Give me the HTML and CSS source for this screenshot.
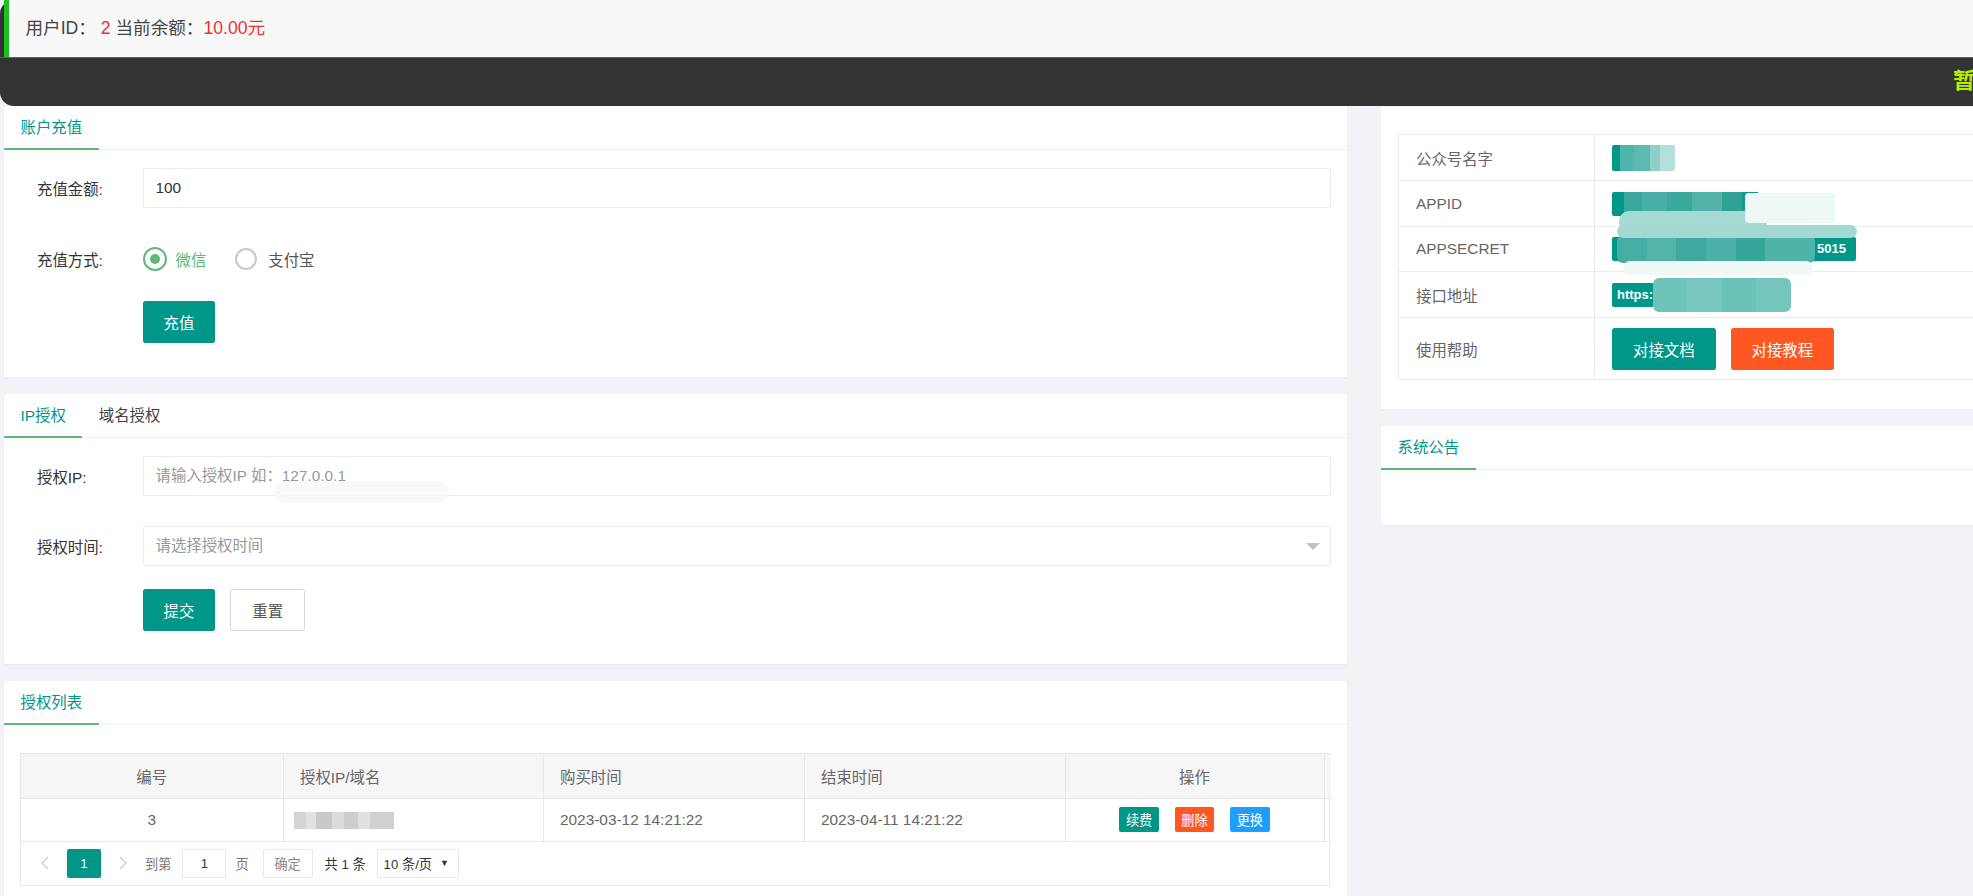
FILE: index.html
```html
<!DOCTYPE html>
<html lang="zh-CN">
<head>
<meta charset="utf-8">
<title>用户中心</title>
<link rel="stylesheet" href="styles.css">
</head>
<body>
<div class="top">
  <div class="quote">用户ID： <span class="red">2</span> 当前余额：<span class="red">10.00元</span></div>
  <div class="notice">暂无公告，欢迎使用本系统</div>
</div>

<div class="main">
  <div class="col-left">
    <div class="card">
      <div class="tabs"><div class="tab active">账户充值</div></div>
      <div class="card-body">
        <div class="form-row">
          <div class="label">充值金额:</div>
          <div class="input">100</div>
        </div>
        <div class="form-row row-radio">
          <div class="label">充值方式:</div>
          <div class="radio"><span class="radio-icon on"></span><span class="radio-text on">微信</span></div>
          <div class="radio"><span class="radio-icon"></span><span class="radio-text">支付宝</span></div>
        </div>
        <div class="form-row row-btn">
          <div class="btn">充值</div>
        </div>
      </div>
    </div>

    <div class="card">
      <div class="tabs"><div class="tab active">IP授权</div><div class="tab">域名授权</div></div>
      <div class="card-body second">
        <div class="form-row">
          <div class="label">授权IP:</div>
          <div class="input placeholder">请输入授权IP 如：127.0.0.1<span class="ip-smear"></span></div>
        </div>
        <div class="form-row row-select">
          <div class="label">授权时间:</div>
          <div class="input placeholder select">请选择授权时间<span class="caret"></span></div>
        </div>
        <div class="form-row row-btn2">
          <div class="btn">提交</div>
          <div class="btn btn-primary">重置</div>
        </div>
      </div>
    </div>

    <div class="card">
      <div class="tabs"><div class="tab active">授权列表</div></div>
      <div class="list-body">
        <div class="table-box">
          <table class="grid">
            <colgroup><col class="c1"><col class="c2"><col class="c3"><col class="c4"><col class="c5"><col class="c6"></colgroup>
            <thead>
              <tr><th class="center">编号</th><th>授权IP/域名</th><th>购买时间</th><th>结束时间</th><th class="center">操作</th><th></th></tr>
            </thead>
            <tbody>
              <tr>
                <td class="center">3</td>
                <td><span class="ip-blur"></span></td>
                <td>2023-03-12 14:21:22</td>
                <td>2023-04-11 14:21:22</td>
                <td class="center ops"><span class="xs teal">续费</span><span class="xs orange">删除</span><span class="xs blue">更换</span></td>
                <td></td>
              </tr>
            </tbody>
          </table>
          <div class="pager">
            <span class="chev"><svg width="8" height="14" viewBox="0 0 8 14"><path d="M7 1 L1 7 L7 13" fill="none" stroke="#c8c8c8" stroke-width="1.2"/></svg></span>
            <span class="page-cur">1</span>
            <span class="chev"><svg width="8" height="14" viewBox="0 0 8 14"><path d="M1 1 L7 7 L1 13" fill="none" stroke="#c8c8c8" stroke-width="1.2"/></svg></span>
            <span class="pg-text light">到第</span>
            <span class="pg-input">1</span>
            <span class="pg-text light">页</span>
            <span class="pg-btn">确定</span>
            <span class="pg-text">共 1 条</span>
            <span class="pg-select">10 条/页 <span class="tri">▼</span></span>
          </div>
        </div>
      </div>
    </div>
  </div>

  <div class="col-right">
    <div class="card info-card">
      <table class="info">
        <colgroup><col class="ic1"><col></colgroup>
        <tr class="r1"><td class="k">公众号名字</td><td class="v"><span class="bd b-name"></span></td></tr>
        <tr class="r2"><td class="k">APPID</td><td class="v"><span class="bd b-appid"></span><span class="smear s-appid"></span><span class="smear s-appid2"></span></td></tr>
        <tr class="r3"><td class="k">APPSECRET</td><td class="v"><span class="bd b-secret">5015</span><span class="blk b-secret-blur"></span><span class="smear s-secret"></span><span class="smear s-secret2"></span></td></tr>
        <tr class="r4"><td class="k">接口地址</td><td class="v"><span class="bd b-url">https:</span><span class="blk b-url-blur"></span></td></tr>
        <tr class="r5"><td class="k">使用帮助</td><td class="v"><span class="btn">对接文档</span><span class="btn btn-orange">对接教程</span></td></tr>
      </table>
    </div>
    <div class="card">
      <div class="tabs"><div class="tab active">系统公告</div></div>
      <div class="notice-body"></div>
    </div>
  </div>
</div>
</body>
</html>
```

FILE: styles.css
```css
* { box-sizing: border-box; }
html, body { margin: 0; padding: 0; }
body {
  width: 1973px;
  height: 896px;
  overflow: hidden;
  background: #f2f3f6;
  font-family: "Liberation Sans", "Noto Sans CJK SC", sans-serif;
  font-size: 15.4px;
  color: #333;
}

/* top */
.top { background: #333; border-radius: 14px 0 0 14px; }
.quote {
  margin-left: 4px;
  height: 57px;
  padding: 16px 16.5px;
  line-height: 25px;
  font-size: 17.6px;
  background: #f8f8f8;
  border-left: 5px solid #1ec21e;
  color: #444;
}
.red { color: #f03030; }
.notice {
  height: 49px;
  border-top: 1px solid #5c5c5c;
  padding-left: 1953px;
  line-height: 46px;
  font-size: 22px;
  font-weight: bold;
  color: #b2f000;
  white-space: nowrap;
  overflow: hidden;
}

/* layout */
.main { display: flex; gap: 34px; padding-left: 4px; align-items: flex-start; }
.col-left { width: 1343px; flex-shrink: 0; display: flex; flex-direction: column; gap: 17px; }
.col-right { width: 640px; flex-shrink: 0; display: flex; flex-direction: column; gap: 17px; padding-top: 1px; }
.card { background: #fff; border-radius: 2px; box-shadow: 0 1px 2px rgba(0,0,0,0.04); }

.tabs { display: flex; height: 44px; border-bottom: 1px solid #f0f0f0; }
.tab { position: relative; padding: 0 16.5px; line-height: 43px; color: #444; }
.tab.active { color: #009688; }
.tab.active::after {
  content: ""; position: absolute; left: 0; right: 0; bottom: -1px;
  height: 2px; background: #5fb878;
}

/* forms */
.card-body { padding: 18px 16.5px 34px; }
.card-body.second { padding-bottom: 33px; }
.form-row { display: flex; align-items: center; }
.label { width: 122px; flex-shrink: 0; padding-left: 16.5px; color: #333; }
.input {
  position: relative;
  flex: 1; height: 40px; line-height: 38px;
  border: 1px solid #ececec; border-radius: 2px;
  padding-left: 12px; color: #333;
}
.placeholder { color: #999; }
.ip-smear {
  position: absolute; left: 130px; top: 24px; width: 175px; height: 22px;
  background: rgba(248,248,248,0.8); border-radius: 12px;
}
.caret {
  position: absolute; right: 10px; top: 16px;
  width: 0; height: 0;
  border-left: 7px solid transparent; border-right: 7px solid transparent;
  border-top: 7px solid #c2c2c2;
}
.row-radio { margin-top: 30px; height: 42px; }
.row-btn { margin-top: 21px; padding-left: 122px; }
.row-select { margin-top: 30px; }
.row-btn2 { margin-top: 23px; padding-left: 122px; gap: 15px; }

.radio { display: flex; align-items: center; }
.radio-icon { width: 22px; height: 22px; border: 2px solid #c8c8c8; border-radius: 50%; position: relative; margin-left: 1px; }
.radio-icon.on { width: 24px; height: 24px; border-color: #5fb878; margin-left: 0; }
.radio-icon.on::after {
  content: ""; position: absolute; left: 5px; top: 5px;
  width: 10px; height: 10px; border-radius: 50%; background: #5fb878;
}
.radio-text { margin-left: 11px; margin-right: 28px; color: #555; }
.radio-text.on { margin-left: 9px; color: #5fb878; }

.btn {
  display: inline-flex; align-items: center; justify-content: center;
  height: 42px; padding: 0 21px;
  background: #009688; color: #fff; border-radius: 2.5px;
  white-space: nowrap;
}
.btn-primary { background: #fff; color: #555; border: 1px solid #d6d6d6; }
.btn-orange { background: #ff5722; }

/* list */
.list-body { padding: 28px 17px 20px 16px; }
.table-box { border: 1px solid #e8e8e8; }
.grid { width: 100%; border-collapse: collapse; table-layout: fixed; color: #666; }
.grid .c1 { width: 262px; }
.grid .c2 { width: 260px; }
.grid .c3 { width: 261px; }
.grid .c4 { width: 261px; }
.grid .c5 { width: 259px; }
.grid .c6 { width: 7px; }
.grid th, .grid td {
  border-right: 1px solid #e8e8e8; border-bottom: 1px solid #e8e8e8;
  padding: 0 16.5px; text-align: left; font-weight: normal; white-space: nowrap;
}
.grid th { height: 44px; background: #f6f6f6; }
.grid td { height: 43px; }
.grid th:last-child, .grid td:last-child { border-right: none; padding: 0; }
.grid .center { text-align: center; }
.grid td.ops { font-size: 0; }
.ip-blur {
  display: inline-block; width: 100px; height: 17px; vertical-align: middle; margin-left: -6px;
  background: linear-gradient(90deg, #d4d4d4 0 12%, #e2e2e2 12% 22%, #c9c9c9 22% 38%, #dcdcdc 38% 50%, #cdcdcd 50% 64%, #e0e0e0 64% 76%, #d0d0d0 76% 100%);
}
.xs {
  display: inline-flex; align-items: center; justify-content: center;
  height: 25px; padding: 0 6.5px; margin: 0 8px;
  font-size: 13.2px; color: #fff; border-radius: 2px; vertical-align: middle;
}
.teal { background: #009688; }
.orange { background: #ff5722; }
.blue { background: #1e9fff; }

.pager { display: flex; align-items: center; height: 43px; padding-left: 20px; font-size: 13.2px; color: #333; }
.chev { display: inline-flex; align-items: center; width: 8px; }
.page-cur {
  display: inline-flex; align-items: center; justify-content: center;
  width: 34px; height: 29px; margin: 0 18px; background: #009688; color: #fff; border-radius: 2px;
}
.pg-text { margin-left: 18px; }
.pg-text.light { color: #777; }
.pg-input {
  display: inline-flex; align-items: center; justify-content: center;
  width: 44px; height: 29px; margin-left: 11px; border: 1px solid #e8e8e8; border-radius: 2px;
}
.pg-input + .pg-text { margin-left: 9px; }
.pg-btn {
  display: inline-flex; align-items: center; justify-content: center;
  width: 50px; height: 29px; margin-left: 14px; border: 1px solid #e8e8e8; border-radius: 2px; color: #888;
}
.pg-btn + .pg-text { margin-left: 12px; }
.pg-select {
  display: inline-flex; align-items: center;
  width: 82px; height: 29px; margin-left: 11px; padding-left: 6px;
  border: 1px solid #e8e8e8; border-radius: 2px;
}
.tri { font-size: 9px; margin-left: 8px; color: #333; }

/* right info card */
.info-card { padding: 27px 17px 29px; }
.info { width: 100%; border-collapse: collapse; table-layout: fixed; color: #666; }
.info .ic1 { width: 196px; }
.info td { border: 1px solid #ececec; padding: 0 17px; }
.info .r1 td, .info .r2 td, .info .r4 td { height: 46px; }
.info .r3 td { height: 45px; }
.info .r5 td { height: 62px; }
.info .v { position: relative; }
.info .r5 .v .btn { margin-right: 15px; }
.bd {
  position: absolute; left: 17px; height: 24px; border-radius: 2px;
  background: #009688; color: #fff; font-size: 13px; line-height: 24px;
}
.b-name {
  top: 10px; width: 63px; height: 26px;
  background: linear-gradient(90deg, #009688 0 8px, #4fb4a9 8px 22px, #5cbab0 22px 38px, #8fd1c9 38px 48px, #b2e0da 48px 100%);
}
.b-appid {
  top: 11px; width: 147px;
  background: linear-gradient(90deg, #009688 0 12px, #3aa89d 12px 30px, #49afa4 30px 55px, #3ca99e 55px 80px, #52b4a9 80px 110px, #2ea194 110px 130px, #139a8c 130px 100%);
}
.smear { position: absolute; border-radius: 10px; }
.s-appid { left: 24px; top: 30px; width: 148px; height: 22px; background: #a6dbd5; }
.s-appid2 { left: 150px; top: 12px; width: 90px; height: 30px; background: #eef8f7; border-radius: 4px; }
.b-secret { top: 10px; width: 244px; text-align: right; padding-right: 10px; font-weight: bold; }
.blk { position: absolute; border-radius: 6px; }
.b-secret-blur {
  left: 22px; top: 8px; width: 198px; height: 28px;
  background: linear-gradient(90deg, #46ada2 0 15%, #54b4a9 15% 30%, #3fa99e 30% 45%, #4cb1a6 45% 60%, #37a69a 60% 75%, #4fb3a8 75% 100%);
}
.s-secret { left: 22px; top: -2px; width: 240px; height: 13px; background: #a4d9d3; }
.s-secret2 { left: 28px; top: 34px; width: 190px; height: 14px; background: #eff8f7; }
.b-url { top: 11px; width: 42px; padding-left: 5px; font-weight: bold; }
.b-url-blur {
  left: 58px; top: 6px; width: 138px; height: 34px;
  background: linear-gradient(90deg, #6ec4ba 0 25%, #79c8bf 25% 50%, #6bc2b8 50% 75%, #74c6bc 75% 100%);
}
.notice-body { height: 55px; }
```
